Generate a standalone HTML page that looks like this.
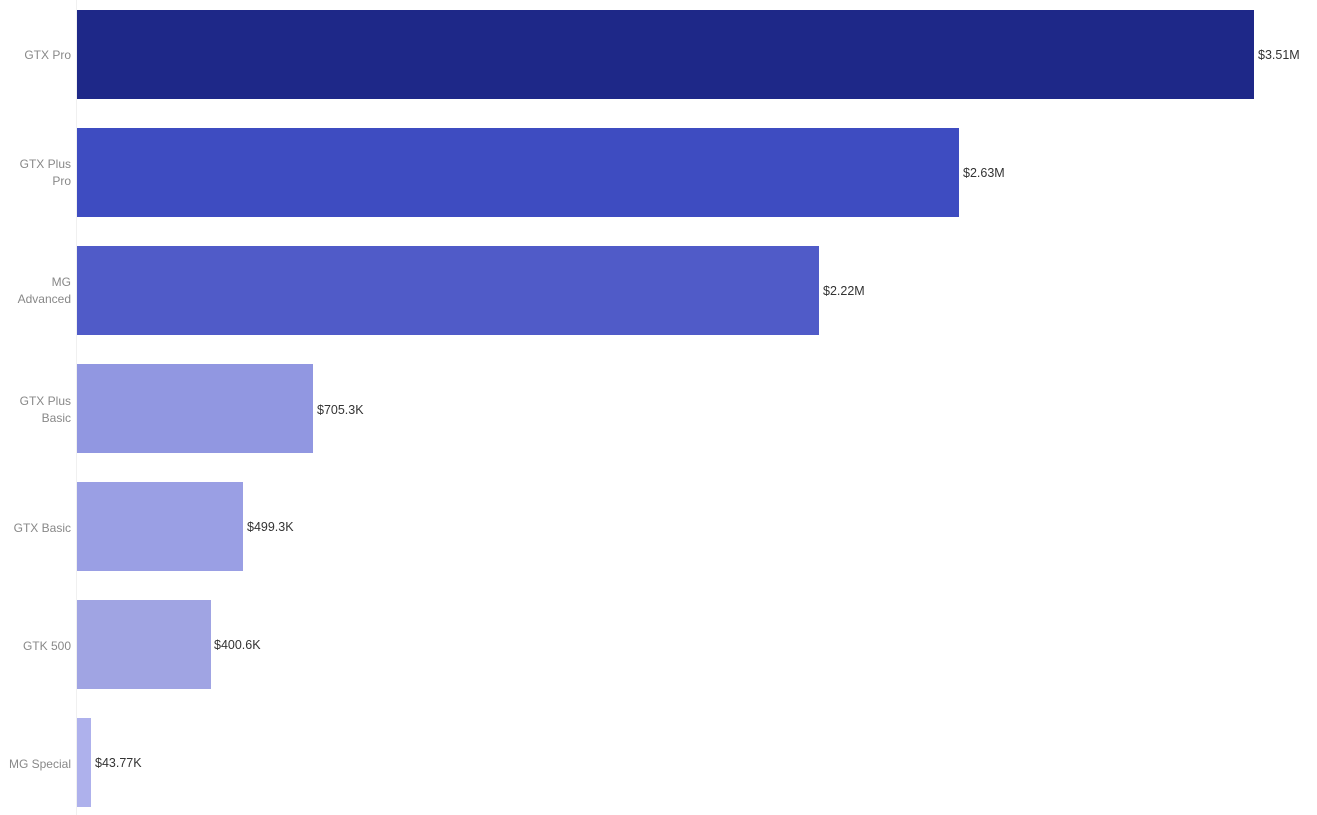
<!DOCTYPE html>
<html><head><style>
body{margin:0;width:1317px;height:815px;background:#fff;position:relative;overflow:hidden;font-family:"Liberation Sans",sans-serif}
.ax{position:absolute;left:76px;top:0;width:1px;height:815px;background:#f0f0f0}
.b{position:absolute;left:77px;height:89px}
.l{position:absolute;right:1246px;width:70px;text-align:right;font-size:12px;color:#888;line-height:17px}
.v{position:absolute;font-size:12.5px;color:#333;line-height:14px}
</style></head><body>
<div class="ax"></div>
<div class="b" style="top:10px;width:1177px;background:#1e2888"></div>
<div class="b" style="top:128px;width:882px;background:#3e4cc1"></div>
<div class="b" style="top:246px;width:742px;background:#505bc8"></div>
<div class="b" style="top:364px;width:236px;background:#9197e1"></div>
<div class="b" style="top:482px;width:166px;background:#9a9fe4"></div>
<div class="b" style="top:600px;width:134px;background:#a0a4e3"></div>
<div class="b" style="top:718px;width:14px;background:#aeb1ec"></div>
<div class="l" style="top:47px">GTX Pro</div>
<div class="l" style="top:156px">GTX Plus<br>Pro</div>
<div class="l" style="top:274px">MG<br>Advanced</div>
<div class="l" style="top:393px">GTX Plus<br>Basic</div>
<div class="l" style="top:520px">GTX Basic</div>
<div class="l" style="top:638px">GTK 500</div>
<div class="l" style="top:756px">MG Special</div>
<div class="v" style="left:1258px;top:48px">$3.51M</div>
<div class="v" style="left:963px;top:166px">$2.63M</div>
<div class="v" style="left:823px;top:284px">$2.22M</div>
<div class="v" style="left:317px;top:403px">$705.3K</div>
<div class="v" style="left:247px;top:520px">$499.3K</div>
<div class="v" style="left:214px;top:638px">$400.6K</div>
<div class="v" style="left:95px;top:756px">$43.77K</div>
</body></html>
